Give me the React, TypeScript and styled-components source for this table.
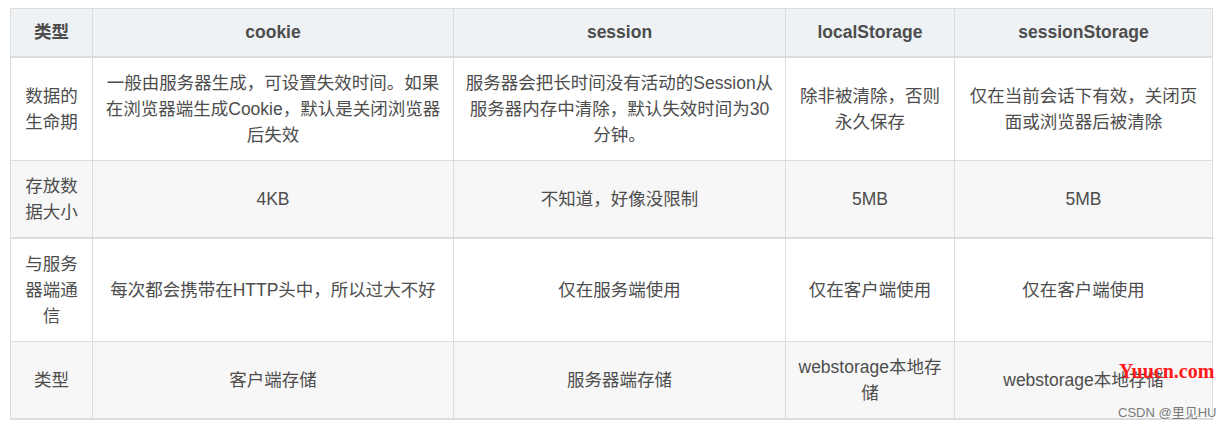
import { createGlobalStyle, styled } from "styled-components";

const GlobalStyle = createGlobalStyle`
  html, body {
    margin: 0;
    padding: 0;
    background: #ffffff;
  }
`;

const Page = styled.div`
  position: relative;
  width: 1229px;
  height: 427px;
  padding: 8px 0 0 10px;
  box-sizing: border-box;
  font-family: "Liberation Sans", "Noto Sans CJK SC", sans-serif;
  color: #4d4d4d;
`;

const Table = styled.table`
  width: 1202px;
  table-layout: fixed;
  border-collapse: collapse;
  font-size: 17.5px;
  line-height: 26px;
`;

const HeadCell = styled.th`
  background-color: #eff2f5;
  border: 1px solid #dcdcdc;
  border-bottom: 2px solid #dcdcdc;
  padding: 10px 8px 11px;
  font-weight: 700;
  text-align: center;
  color: #4d4d4d;
`;

const Row = styled.tr<{ $striped?: boolean; $thick?: boolean }>`
  background-color: ${(p) => (p.$striped ? "#f7f7f7" : "#ffffff")};
  border-bottom: ${(p) => (p.$thick ? "2px" : "1px")} solid #dcdcdc;
`;

const Cell = styled.td`
  border-left: 1px solid #dcdcdc;
  border-right: 1px solid #dcdcdc;
  padding: 12px 8px;
  text-align: center;
  vertical-align: middle;
`;

const Watermark = styled.div`
  position: absolute;
  left: 1119px;
  top: 360px;
  font-family: "Liberation Serif", serif;
  font-size: 20px;
  font-weight: 700;
  color: #ff1a1a;
`;

const Credit = styled.div`
  position: absolute;
  left: 1118px;
  top: 402px;
  font-family: "Liberation Sans", "Noto Sans CJK SC", sans-serif;
  font-size: 13px;
  color: #7a7a7a;
`;

const widths = [82, 361, 332, 169, 258];
const headers = ["类型", "cookie", "session", "localStorage", "sessionStorage"];

const rows = [
  [
    "数据的生命期",
    "一般由服务器生成，可设置失效时间。如果在浏览器端生成Cookie，默认是关闭浏览器后失效",
    "服务器会把长时间没有活动的Session从服务器内存中清除，默认失效时间为30分钟。",
    "除非被清除，否则永久保存",
    "仅在当前会话下有效，关闭页面或浏览器后被清除",
  ],
  ["存放数据大小", "4KB", "不知道，好像没限制", "5MB", "5MB"],
  [
    "与服务器端通信",
    "每次都会携带在HTTP头中，所以过大不好",
    "仅在服务端使用",
    "仅在客户端使用",
    "仅在客户端使用",
  ],
  ["类型", "客户端存储", "服务器端存储", "webstorage本地存储", "webstorage本地存储"],
];

export default function App() {
  return (
    <Page>
      <GlobalStyle />
      <Table>
        <colgroup>
          {widths.map((w, i) => (
            <col key={i} style={{ width: w }} />
          ))}
        </colgroup>
        <thead>
          <tr>
            {headers.map((h) => (
              <HeadCell key={h}>{h}</HeadCell>
            ))}
          </tr>
        </thead>
        <tbody>
          {rows.map((r, i) => (
            <Row key={i} $striped={i % 2 === 1} $thick={i === 1 || i === 3}>
              {r.map((c, j) => (
                <Cell key={j}>{c}</Cell>
              ))}
            </Row>
          ))}
        </tbody>
      </Table>
      <Watermark>Yuucn.com</Watermark>
      <Credit>CSDN @里见HU</Credit>
    </Page>
  );
}
